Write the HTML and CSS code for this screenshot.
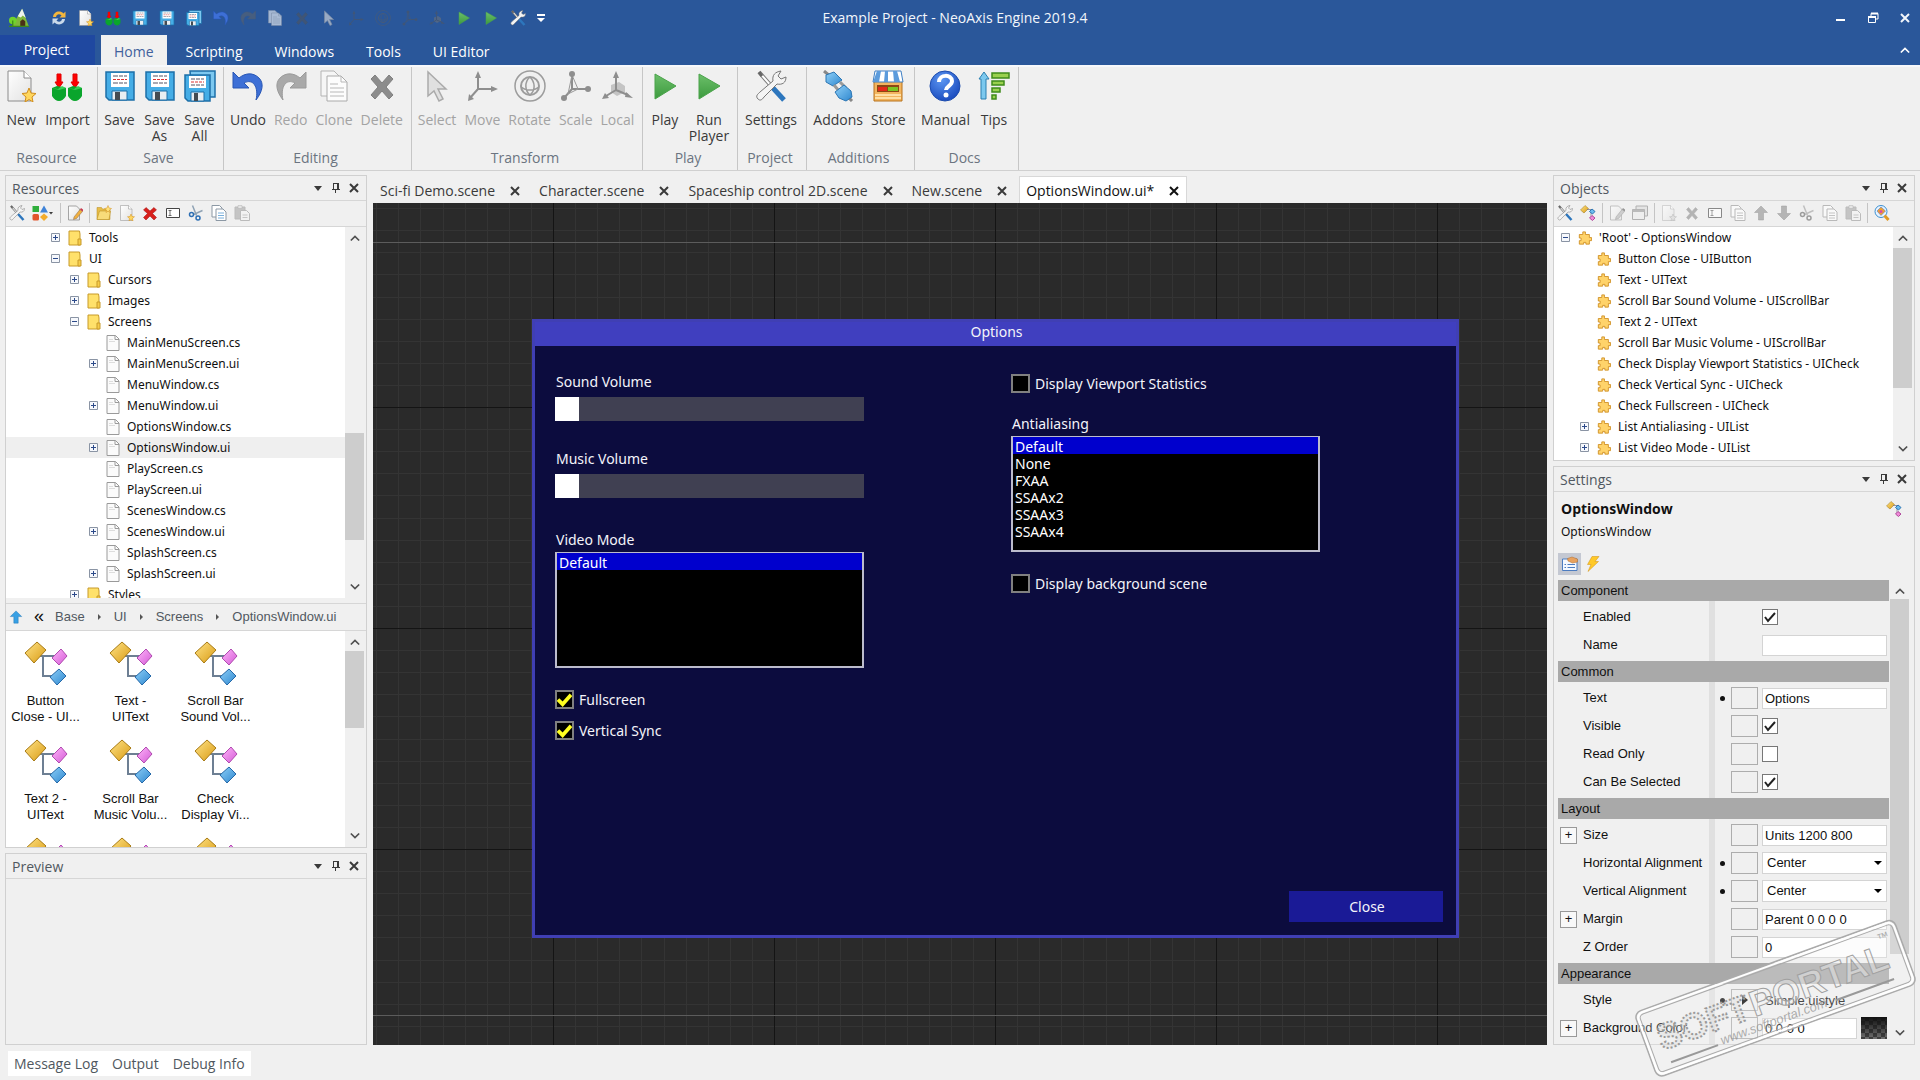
FILE: index.html
```html
<!DOCTYPE html>
<html lang="en">
<head>
<meta charset="utf-8">
<title>Example Project - NeoAxis Engine 2019.4</title>
<link rel="stylesheet" href="styles.css">
</head>
<body>
<svg class="sprite" aria-hidden="true">
  <defs>
    <linearGradient id="g-green" x1="0" y1="0" x2="0" y2="1"><stop offset="0" stop-color="#6cbf6a"/><stop offset="1" stop-color="#3c9a3e"/></linearGradient>
    <linearGradient id="g-blue" x1="0" y1="0" x2="1" y2="1"><stop offset="0" stop-color="#8fd0f8"/><stop offset="1" stop-color="#2e87cf"/></linearGradient>
    <linearGradient id="g-gold" x1="0" y1="0" x2="1" y2="1"><stop offset="0" stop-color="#ffe488"/><stop offset="1" stop-color="#d99a12"/></linearGradient>
    <linearGradient id="g-pink" x1="0" y1="0" x2="1" y2="1"><stop offset="0" stop-color="#ffb6fa"/><stop offset="1" stop-color="#d45ad6"/></linearGradient>
    <linearGradient id="g-page" x1="0" y1="0" x2="1" y2="1"><stop offset="0" stop-color="#ffffff"/><stop offset="1" stop-color="#e2e2e2"/></linearGradient>
    <radialGradient id="g-help" cx=".4" cy=".3" r=".8"><stop offset="0" stop-color="#5b96f2"/><stop offset="1" stop-color="#1443b8"/></radialGradient>
  </defs>
  <symbol id="i-new" viewBox="0 0 32 32"><path d="M3 1h16l7 7v23H3z" fill="url(#g-page)" stroke="#8c8c8c"/><path d="M19 1v7h7" fill="#fff" stroke="#8c8c8c"/><path d="M24 18l2 5 5 .500-4 3.500 1 5-4-2.500-4 2.500 1-5-4-3.500 5-.5z" fill="#ffd75e" stroke="#d08c1c"/></symbol>
  <symbol id="i-import" viewBox="0 0 32 32"><path d="M6 4h4v8h2l-4 6-4-6h2zM22 4h4v8h2l-4 6-4-6h2z" fill="#f00" stroke="#e00000"/><path d="M1 18l5-2 9 2v8q-3 5-7 5t-7-5zM17 18l5-2 9 2v8q-3 5-7 5t-7-5z" fill="#0aa52c"/><path d="M1 18l7 2 7-2-4-2-4 3zM17 18l7 2 7-2-4-2-4 3z" fill="#35cf55"/></symbol>
  <symbol id="i-save" viewBox="0 0 32 32"><path d="M2 2h28v28H5l-3-3z" fill="#45ade6" stroke="#1c6fa8" stroke-width="1.500"/><path d="M7 3h18v14H7z" fill="#fff"/><path d="M9 6h5m1 0h4m1 0h3M9 13h5m1 0h4m1 0h3" stroke="#556"/><path d="M9 9.500h14" stroke="#d33" stroke-dasharray="3 1"/><path d="M8 21h15v9H8z" fill="#e9eef2" stroke="#1c6fa8"/><path d="M11 22h5v8h-5z" fill="#444b52"/></symbol>
  <symbol id="i-saveall" viewBox="0 0 32 32"><path d="M6 1h25v26H8z" fill="#7cc8f0" stroke="#1c6fa8" stroke-width="1.500"/><path d="M1 5h25v26H4l-3-3z" fill="#45ade6" stroke="#1c6fa8" stroke-width="1.500"/><path d="M5 6h17v12H5z" fill="#fff"/><path d="M7 9h4m1 0h4m1 0h3M7 15h4m1 0h4m1 0h3" stroke="#556"/><path d="M7 12h13" stroke="#d33" stroke-dasharray="3 1"/><path d="M7 22h13v9H7z" fill="#e9eef2" stroke="#1c6fa8"/><path d="M10 23h4v8h-4z" fill="#444b52"/></symbol>
  <symbol id="i-undo" viewBox="0 0 32 32"><path d="M1 2v16h16l-5-5c9-5 15 4 12 17 7-9 8-17 3-22C21 2 13 3 7 8z" fill="#3d6fd6" stroke="#2856b4"/></symbol>
  <symbol id="i-redo" viewBox="0 0 32 32"><path d="M31 2v16H15l5-5C11 8 5 17 8 30 1 21 0 13 5 8c6-6 14-5 20 0z" fill="#a9a9a9" stroke="#9a9a9a"/></symbol>
  <symbol id="i-clone" viewBox="0 0 32 32"><path d="M3 1h13l5 5v20H3z" fill="#f6f6f6" stroke="#b4b4b4"/><path d="M9 6h14l6 6v19H9z" fill="#fcfcfc" stroke="#aaa"/><path d="M23 6v6h6M12 14h8m-8 4h14m-14 4h14m-14 4h14" fill="none" stroke="#b8b8b8"/></symbol>
  <symbol id="i-delete" viewBox="0 0 32 32"><path d="M9 5l7 8 7-8 4 4-7 8 7 8-4 4-7-8-7 8-4-4 7-8-7-8z" fill="#8c8c8c" stroke="#808080"/></symbol>
  <symbol id="i-select" viewBox="0 0 32 32"><path d="M7 2v24l6-5 5 10 4-2-5-10h8z" fill="#e0e0e0" stroke="#aaa" stroke-width="1.500"/></symbol>
  <symbol id="i-move" viewBox="0 0 32 32"><path d="M12 5v14h15M12 19l-8 9" fill="none" stroke="#8e8e8e" stroke-width="2"/><path d="M12 1l3 7H9zM32 19l-7-3v6zM2 31l1-7 5 5z" fill="#8e8e8e"/></symbol>
  <symbol id="i-rotate" viewBox="0 0 32 32"><g fill="none" stroke="#9c9c9c"><circle cx="16" cy="16" r="15" stroke-width="1.500"/><circle cx="16" cy="16" r="9" stroke-width="2"/><path d="M16 7c-6 5-5 14 0 18 6-5 5-13 0-18M7 17c5 4 13 4 18 0" stroke-width="1.500"/></g></symbol>
  <symbol id="i-scale" viewBox="0 0 32 32"><path d="M12 5v14h16M12 19l-8 9" fill="none" stroke="#8e8e8e" stroke-width="2"/><path d="M12 5l6 14-10 5z" fill="none" stroke="#999"/><circle cx="12" cy="4" r="3" fill="#8e8e8e"/><circle cx="28" cy="19" r="3" fill="#8e8e8e"/><circle cx="4" cy="28" r="3" fill="#8e8e8e"/></symbol>
  <symbol id="i-local" viewBox="0 0 32 32"><path d="M10 15l8-3 6 4v6l-8 4-6-4z" fill="#c4c4c4"/><path d="M15 6v14l12 5M15 20L5 26" fill="none" stroke="#8e8e8e" stroke-width="2"/><path d="M15 1l3 7h-6zM32 28l-7-6-1 5zM1 29l3-6 4 5z" fill="#8e8e8e"/></symbol>
  <symbol id="i-play" viewBox="0 0 32 32"><path d="M6 4l21 12L6 29z" fill="url(#g-green)" stroke="#4aa34a"/></symbol>
  <symbol id="i-tools" viewBox="0 0 32 32"><path d="M4 2l14 16" stroke="#777" stroke-width="4"/><path d="M4 2l14 16" stroke="#fff" stroke-width="2"/><path d="M18 18l11 12" stroke="#2d76bd" stroke-width="5"/><path d="M3 29c-3-3 0-5 2-7l13-11c-1-6 2-9 8-10l-3 5 3 3 5-2c0 6-4 8-9 7L9 27c-2 3-4 4-6 2z" fill="#f4f4f4" stroke="#777"/><path d="M4 2l3 4" stroke="#666" stroke-width="3"/></symbol>
  <symbol id="i-addons" viewBox="0 0 32 32"><path d="M2 1l7 6M24 25l6 6" stroke="#888" stroke-width="3"/><path d="M4 5l8-3 8 8-9 6-7-4z" fill="url(#g-blue)" stroke="#2b76b4"/><path d="M12 15l5 6m1-9l6 6" stroke="#9a9a9a" stroke-width="3"/><path d="M13 22l9-7 7 6 1 6-6 4-7-3z" fill="url(#g-blue)" stroke="#2b76b4"/></symbol>
  <symbol id="i-store" viewBox="0 0 32 32"><path d="M2 11h28v20H2z" fill="#f3b55f" stroke="#b8721d"/><path d="M5 15h22v7H5z" fill="#8c4714"/><path d="M6 17h9v4H6z" fill="#e32a1a"/><path d="M16 17h10v4H16z" fill="#7cc423"/><path d="M3 25h26M3 28h26" stroke="#ffe0a6" stroke-width="2"/><path d="M3 1h26l2 11H1z" fill="#fff" stroke="#3e7fc4"/><path d="M5 1h4l-2 11H1zM13 1h3v11h-4zM21 1h4l3 11h-6z" fill="#5b9bdc"/></symbol>
  <symbol id="i-help" viewBox="0 0 32 32"><circle cx="16" cy="16" r="15" fill="url(#g-help)" stroke="#1d4cae"/><path d="M10 12c0-8 13-8 13-1 0 5-6 5-6 9" fill="none" stroke="#fff" stroke-width="4"/><circle cx="17" cy="25" r="2.500" fill="#fff"/></symbol>
  <symbol id="i-tips" viewBox="0 0 32 32"><path d="M6 2l5 7H8v20H3V9H1z" fill="#7cc8ee" stroke="#2a7fb0"/><g fill="#9ad04e" stroke="#3f8a1a" stroke-width="1.500"><path d="M14 3h17v5H14z"/><path d="M14 11h12v4H14z"/><path d="M14 18h8v4h-8z"/><path d="M14 25h4v4h-4z"/></g></symbol>
  <symbol id="i-refresh" viewBox="0 0 32 32"><path d="M4 14C5 3 18 0 25 7l4-4v12H17l4-4c-4-4-10-3-11 3z" fill="#f3b63c"/><path d="M28 18c-1 11-14 14-21 7l-4 4V17h12l-4 4c4 4 10 3 11-3z" fill="#c9d9ea"/></symbol>
  <symbol id="i-logo" viewBox="0 0 32 32"><path d="M4 30L21 1l11 29z" fill="#7fb83c"/><path d="M21 1l-7 12 5 2 3-3 5 4z" fill="#eef3ee"/><path d="M18 30v-9l4-3 4 3v9z" fill="#4a3018"/><circle cx="6" cy="20" r="6" fill="#6fd42c"/><path d="M6 20v10M0 29.500h32" stroke="#3c8a1c" stroke-width="2"/></symbol>
  <symbol id="i-edit" viewBox="0 0 32 32"><path d="M3 2h16l6 6v22H3z" fill="url(#g-page)" stroke="#8a8a8a" stroke-width="1.500"/><path d="M14 24L26 9l5 4-12 14-6 2z" fill="#f0b040" stroke="#8a6a4a"/><path d="M26 9l2-3 5 4-2 3z" fill="#c83c50"/></symbol>
  <symbol id="i-newfolder" viewBox="0 0 32 32"><path d="M2 5h9l2 3h15v21H2z" fill="#e7bd4a" stroke="#b58a1c"/><path d="M2 29l5-17h22l-3 17z" fill="#f8dc7a" stroke="#b58a1c"/><path d="M24 1l2 5 5 1-4 3 1 5-4-3-4 3 1-5-4-3 5-1z" fill="#ffe27a" stroke="#d08c1c"/></symbol>
  <symbol id="i-redx" viewBox="0 0 32 32"><path d="M8 5l8 7 8-7 5 5-8 7 8 8-5 5-8-8-8 8-5-5 8-8-8-7z" fill="#d8201c" stroke="#9c0f0f"/></symbol>
  <symbol id="i-rename" viewBox="0 0 32 32"><path d="M3 7h26v18H3z" fill="#fff" stroke="#444" stroke-width="2"/><path d="M7 11h6M10 11v10M7 21h6" stroke="#444" stroke-width="1.500" fill="none"/></symbol>
  <symbol id="i-cut" viewBox="0 0 32 32"><path d="M9 1l8 20M29 11L11 19" stroke="#8fa2b4" stroke-width="3"/><circle cx="7" cy="19" r="4" fill="none" stroke="#2e6fb4" stroke-width="3"/><circle cx="20" cy="26" r="4" fill="none" stroke="#2e6fb4" stroke-width="3"/></symbol>
  <symbol id="i-copy" viewBox="0 0 32 32"><path d="M2 1h15l5 5v18H2z" fill="#fff" stroke="#8c98a4" stroke-width="2"/><path d="M10 8h14l6 6v17H10z" fill="#fff" stroke="#8c98a4" stroke-width="2"/><path d="M14 16h12m-12 5h12m-12 5h12" stroke="#7ab0dc" stroke-width="2"/></symbol>
  <symbol id="i-paste" viewBox="0 0 32 32"><path d="M2 4h20v24H2z" fill="#a8a8a8" stroke="#999" stroke-width="2"/><path d="M8 1h8v6H8z" fill="#ddd" stroke="#888"/><path d="M13 11h12l6 6v14H13z" fill="#f4f4f4" stroke="#999" stroke-width="2"/><path d="M17 20h10m-10 5h10" stroke="#aaa" stroke-width="2"/></symbol>
  <symbol id="i-shapes" viewBox="0 0 32 32"><path d="M1 2h13v12H1z" fill="#2fae3c"/><path d="M24 1l8 14H16z" fill="#3f83d8"/><rect x="1" y="18" width="13" height="13" rx="3" fill="#e2542c"/><path d="M24 17l8 7-8 8-8-8z" fill="#f2ac2e"/></symbol>
  <symbol id="i-folder" viewBox="0 0 26 32"><path d="M1 2h21l1 6v22H1z" fill="#ffe16b" stroke="#c79a2a" stroke-width="2"/><path d="M19 18h6v12h-6z" fill="#f6cc4a" stroke="#c79a2a" stroke-width="2"/></symbol>
  <symbol id="i-file" viewBox="0 0 26 32"><path d="M1 1h17l7 7v23H1z" fill="#fbfbfb" stroke="#9a9a9a" stroke-width="2"/><path d="M17 1v8h8" fill="none" stroke="#9a9a9a" stroke-width="2"/><path d="M5 9h8m-8 4h12" stroke="#ddd" stroke-width="2"/></symbol>
  <symbol id="i-puzzle" viewBox="0 0 32 32"><path d="M3 8h8V2h6v6h9v7h5v7h-5v8h-8v-4h-5v4H3v-8h4v-6H3z" fill="#ffd36a" stroke="#cf8f24" stroke-width="2"/></symbol>
  <symbol id="i-parts" viewBox="0 0 32 32"><path d="M1 10l9-9 7 6-9 9z" fill="url(#g-gold)" stroke="#9a7418"/><path d="M14 9h8v15h4" fill="none" stroke="#778" stroke-width="1.500"/><path d="M19 13l5-5 6 5-5 5z" fill="#6cbcf0" stroke="#2b76b4" stroke-width="2"/><path d="M19 26l5-5 6 5-5 5z" fill="#f08ad8" stroke="#b04a9c" stroke-width="2"/></symbol>
  <symbol id="i-component" viewBox="0 0 44 44"><path d="M16 15h18M19 15v20h12" fill="none" stroke="#6d7f93" stroke-width="2"/><path d="M1 12L13 1l9 8-12 13z" fill="url(#g-gold)" stroke="#a87b14"/><path d="M28 17l9-9 6 7-8 9z" fill="url(#g-pink)" stroke="#b04ab0"/><path d="M26 36l9-8 7 7-9 9z" fill="url(#g-blue)" stroke="#2468a8"/></symbol>
  <symbol id="i-window" viewBox="0 0 32 32"><path d="M8 2h23v20H8z" fill="#ddd" stroke="#888" stroke-width="2"/><path d="M1 9h24v20H1z" fill="#eee" stroke="#888" stroke-width="2"/><path d="M1 9h24v5H1z" fill="#999"/></symbol>
  <symbol id="i-up" viewBox="0 0 32 32"><path d="M16 2l13 13h-8v15H11V15H3z" fill="#38a0e4" stroke="#1c74b4"/></symbol>
  <symbol id="i-down" viewBox="0 0 32 32"><path d="M16 30L3 17h8V2h10v15h8z" fill="#38a0e4" stroke="#1c74b4"/></symbol>
  <symbol id="i-search" viewBox="0 0 32 32"><circle cx="14" cy="13" r="12" fill="#e8f4ff" stroke="#3b8ed0" stroke-width="2"/><path d="M14 4l9 8-9 9-8-9z" fill="#f0a02e" stroke="#3b6ed0"/><circle cx="14" cy="13" r="3" fill="#d84ca8"/><path d="M21 21l8 9" stroke="#e09a24" stroke-width="6"/></symbol>
  <symbol id="i-bolt" viewBox="0 0 32 32"><path d="M14 1h14l-8 10h7L6 31l6-14H5z" fill="#ffc928" stroke="#d08e10"/></symbol>
  <symbol id="i-props" viewBox="0 0 32 32"><path d="M1 6h29v23H1z" fill="#f4f8ff" stroke="#4c7cc0" stroke-width="2"/><path d="M5 17h3m3 0h15M5 23h3m3 0h15" stroke="#4c7cc0" stroke-width="2"/><path d="M11 5l9-3 11 4v6l-10 2-9-4z" fill="#e8a25e" stroke="#b06c2c"/></symbol>
  <symbol id="i-x" viewBox="0 0 12 12"><path d="M2 2l8 8M10 2l-8 8" stroke="currentColor" stroke-width="2" fill="none"/></symbol>
  <symbol id="i-pin" viewBox="0 0 12 12"><path d="M3.500 1v6M3 1.500h5M2 7.500h8M5.500 7v4" stroke="currentColor" fill="none"/><path d="M7 1h2v6H7z" fill="currentColor"/></symbol>
  <symbol id="i-tri" viewBox="0 0 12 12"><path d="M2 4h8L6 9z" fill="currentColor"/></symbol>
  <symbol id="i-chup" viewBox="0 0 12 12"><path d="M1 9l5-5 5 5" fill="none" stroke="currentColor" stroke-width="2"/></symbol>
  <symbol id="i-chdown" viewBox="0 0 12 12"><path d="M1 3l5 5 5-5" fill="none" stroke="currentColor" stroke-width="2"/></symbol>
  <symbol id="i-plus" viewBox="0 0 9 9"><path d="M.5.500h8v8h-8z" fill="#f6f8fc" stroke="#8a94a4"/><path d="M2 4.500h5M4.500 2v5" stroke="#2c4a8a"/></symbol>
  <symbol id="i-minus" viewBox="0 0 9 9"><path d="M.5.500h8v8h-8z" fill="#f6f8fc" stroke="#8a94a4"/><path d="M2 4.500h5" stroke="#2c4a8a"/></symbol>
</svg>

<header class="titlebar">
  <div class="quick">
    <svg class="logo" aria-hidden="true"><use href="#i-logo"/></svg>
    <button aria-label="Refresh"><svg><use href="#i-refresh"/></svg></button>
    <button aria-label="New"><svg><use href="#i-new"/></svg></button>
    <button aria-label="Import"><svg><use href="#i-import"/></svg></button>
    <button aria-label="Save"><svg><use href="#i-save"/></svg></button>
    <button aria-label="Save As"><svg><use href="#i-save"/></svg></button>
    <button aria-label="Save All"><svg><use href="#i-saveall"/></svg></button>
    <button aria-label="Undo"><svg><use href="#i-undo"/></svg></button>
    <button aria-label="Redo" disabled><svg><use href="#i-redo"/></svg></button>
    <button aria-label="Clone" class="half"><svg><use href="#i-clone"/></svg></button>
    <button aria-label="Delete" disabled><svg><use href="#i-delete"/></svg></button>
    <button aria-label="Select" class="half"><svg><use href="#i-select"/></svg></button>
    <button aria-label="Move" disabled><svg><use href="#i-move"/></svg></button>
    <button aria-label="Rotate" disabled><svg><use href="#i-rotate"/></svg></button>
    <button aria-label="Scale" disabled><svg><use href="#i-scale"/></svg></button>
    <button aria-label="Local" disabled><svg><use href="#i-local"/></svg></button>
    <button aria-label="Play"><svg><use href="#i-play"/></svg></button>
    <button aria-label="Run Player"><svg><use href="#i-play"/></svg></button>
    <button aria-label="Settings"><svg><use href="#i-tools"/></svg></button>
    <button aria-label="Customize" class="more"><svg viewBox="0 0 8 8"><path d="M0 0h8v2H0zM0 4h8L4 8z" fill="#fff"/></svg></button>
  </div>
  <h1 class="title">Example Project - NeoAxis Engine 2019.4</h1>
  <div class="winbtns">
    <button aria-label="Minimize"><svg viewBox="0 0 12 12"><path d="M1 7h9v2H1z" fill="#fff"/></svg></button>
    <button aria-label="Restore"><svg viewBox="0 0 12 12"><path d="M1.500 5.500h7v5h-7zM4 4V1.500h7V7H9" fill="none" stroke="#fff"/><path d="M1 5h8M4 1.500h7" stroke="#fff" stroke-width="2"/></svg></button>
    <button aria-label="Close window"><svg><use href="#i-x"/></svg></button>
  </div>
</header>

<nav class="menubar">
  <button class="menu project">Project</button>
  <button class="menu current">Home</button>
  <button class="menu">Scripting</button>
  <button class="menu">Windows</button>
  <button class="menu">Tools</button>
  <button class="menu">UI Editor</button>
  <button class="collapse" aria-label="Collapse ribbon"><svg><use href="#i-chup"/></svg></button>
</nav>

<section class="ribbon">
  <div class="group w-resource">
    <div class="tools"><button><svg><use href="#i-new"/></svg>New</button><button><svg><use href="#i-import"/></svg>Import</button></div>
    <div class="caption">Resource</div>
  </div>
  <div class="group w-save">
    <div class="tools"><button><svg><use href="#i-save"/></svg>Save</button><button><svg><use href="#i-save"/></svg>Save<br>As</button><button><svg><use href="#i-saveall"/></svg>Save<br>All</button></div>
    <div class="caption">Save</div>
  </div>
  <div class="group w-editing">
    <div class="tools"><button><svg><use href="#i-undo"/></svg>Undo</button><button disabled><svg><use href="#i-redo"/></svg>Redo</button><button disabled><svg><use href="#i-clone"/></svg>Clone</button><button disabled><svg><use href="#i-delete"/></svg>Delete</button></div>
    <div class="caption">Editing</div>
  </div>
  <div class="group w-transform">
    <div class="tools"><button disabled><svg><use href="#i-select"/></svg>Select</button><button disabled><svg><use href="#i-move"/></svg>Move</button><button disabled><svg><use href="#i-rotate"/></svg>Rotate</button><button disabled><svg><use href="#i-scale"/></svg>Scale</button><button disabled><svg><use href="#i-local"/></svg>Local</button></div>
    <div class="caption">Transform</div>
  </div>
  <div class="group w-play">
    <div class="tools"><button><svg><use href="#i-play"/></svg>Play</button><button><svg><use href="#i-play"/></svg>Run<br>Player</button></div>
    <div class="caption">Play</div>
  </div>
  <div class="group w-project">
    <div class="tools"><button><svg><use href="#i-tools"/></svg>Settings</button></div>
    <div class="caption">Project</div>
  </div>
  <div class="group w-additions">
    <div class="tools"><button><svg><use href="#i-addons"/></svg>Addons</button><button><svg><use href="#i-store"/></svg>Store</button></div>
    <div class="caption">Additions</div>
  </div>
  <div class="group w-docs">
    <div class="tools"><button><svg><use href="#i-help"/></svg>Manual</button><button><svg><use href="#i-tips"/></svg>Tips</button></div>
    <div class="caption">Docs</div>
  </div>
</section>

<main class="workspace">
  <aside class="side">
    <section class="panel grow">
      <header class="phead"><h2>Resources</h2><button aria-label="Menu"><svg><use href="#i-tri"/></svg></button><button aria-label="Pin"><svg><use href="#i-pin"/></svg></button><button aria-label="Close"><svg><use href="#i-x"/></svg></button></header>
      <div class="toolbar">
        <button aria-label="Options"><svg><use href="#i-tools"/></svg></button>
        <button aria-label="Filter" class="drop"><svg><use href="#i-shapes"/></svg><svg class="caret"><use href="#i-tri"/></svg></button>
        <span class="sep"></span>
        <button aria-label="Edit"><svg><use href="#i-edit"/></svg></button>
        <span class="sep"></span>
        <button aria-label="New folder"><svg><use href="#i-newfolder"/></svg></button>
        <button aria-label="New resource"><svg><use href="#i-new"/></svg></button>
        <button aria-label="Delete"><svg><use href="#i-redx"/></svg></button>
        <button aria-label="Rename"><svg><use href="#i-rename"/></svg></button>
        <button aria-label="Cut"><svg><use href="#i-cut"/></svg></button>
        <button aria-label="Copy"><svg><use href="#i-copy"/></svg></button>
        <button aria-label="Paste" disabled><svg><use href="#i-paste"/></svg></button>
      </div>
      <div class="scrollbox grow">
        <ul class="tree">
          <li class="d1"><svg class="exp"><use href="#i-plus"/></svg><svg class="ico"><use href="#i-folder"/></svg>Tools</li>
          <li class="d1"><svg class="exp"><use href="#i-minus"/></svg><svg class="ico"><use href="#i-folder"/></svg>UI</li>
          <li class="d2"><svg class="exp"><use href="#i-plus"/></svg><svg class="ico"><use href="#i-folder"/></svg>Cursors</li>
          <li class="d2"><svg class="exp"><use href="#i-plus"/></svg><svg class="ico"><use href="#i-folder"/></svg>Images</li>
          <li class="d2"><svg class="exp"><use href="#i-minus"/></svg><svg class="ico"><use href="#i-folder"/></svg>Screens</li>
          <li class="d3"><svg class="exp"></svg><svg class="ico"><use href="#i-file"/></svg>MainMenuScreen.cs</li>
          <li class="d3"><svg class="exp"><use href="#i-plus"/></svg><svg class="ico"><use href="#i-file"/></svg>MainMenuScreen.ui</li>
          <li class="d3"><svg class="exp"></svg><svg class="ico"><use href="#i-file"/></svg>MenuWindow.cs</li>
          <li class="d3"><svg class="exp"><use href="#i-plus"/></svg><svg class="ico"><use href="#i-file"/></svg>MenuWindow.ui</li>
          <li class="d3"><svg class="exp"></svg><svg class="ico"><use href="#i-file"/></svg>OptionsWindow.cs</li>
          <li class="d3 selected"><svg class="exp"><use href="#i-plus"/></svg><svg class="ico"><use href="#i-file"/></svg>OptionsWindow.ui</li>
          <li class="d3"><svg class="exp"></svg><svg class="ico"><use href="#i-file"/></svg>PlayScreen.cs</li>
          <li class="d3"><svg class="exp"></svg><svg class="ico"><use href="#i-file"/></svg>PlayScreen.ui</li>
          <li class="d3"><svg class="exp"></svg><svg class="ico"><use href="#i-file"/></svg>ScenesWindow.cs</li>
          <li class="d3"><svg class="exp"><use href="#i-plus"/></svg><svg class="ico"><use href="#i-file"/></svg>ScenesWindow.ui</li>
          <li class="d3"><svg class="exp"></svg><svg class="ico"><use href="#i-file"/></svg>SplashScreen.cs</li>
          <li class="d3"><svg class="exp"><use href="#i-plus"/></svg><svg class="ico"><use href="#i-file"/></svg>SplashScreen.ui</li>
          <li class="d2"><svg class="exp"><use href="#i-plus"/></svg><svg class="ico"><use href="#i-folder"/></svg>Styles</li>
        </ul>
        <div class="vscroll"><svg><use href="#i-chup"/></svg><div class="track"><span class="thumb at-files"></span></div><svg><use href="#i-chdown"/></svg></div>
      </div>
      <nav class="crumbs">
        <button aria-label="Up"><svg><use href="#i-up"/></svg></button>
        <span class="back">«</span><a href="#base">Base</a><i></i><a href="#ui">UI</a><i></i><a href="#screens">Screens</a><i></i><a href="#options">OptionsWindow.ui</a>
      </nav>
      <div class="scrollbox contents">
        <ul class="tiles">
          <li><svg><use href="#i-component"/></svg>Button<br>Close - UI...</li>
          <li><svg><use href="#i-component"/></svg>Text -<br>UIText</li>
          <li><svg><use href="#i-component"/></svg>Scroll Bar<br>Sound Vol...</li>
          <li><svg><use href="#i-component"/></svg>Text 2 -<br>UIText</li>
          <li><svg><use href="#i-component"/></svg>Scroll Bar<br>Music Volu...</li>
          <li><svg><use href="#i-component"/></svg>Check<br>Display Vi...</li>
          <li><svg><use href="#i-component"/></svg></li>
          <li><svg><use href="#i-component"/></svg></li>
          <li><svg><use href="#i-component"/></svg></li>
        </ul>
        <div class="vscroll"><svg><use href="#i-chup"/></svg><div class="track"><span class="thumb at-tiles"></span></div><svg><use href="#i-chdown"/></svg></div>
      </div>
    </section>
    <section class="panel preview">
      <header class="phead"><h2>Preview</h2><button aria-label="Menu"><svg><use href="#i-tri"/></svg></button><button aria-label="Pin"><svg><use href="#i-pin"/></svg></button><button aria-label="Close"><svg><use href="#i-x"/></svg></button></header>
    </section>
  </aside>

  <section class="editor">
    <div class="doctabs">
      <div class="doctab"><a href="#d1">Sci-fi Demo.scene</a><button aria-label="Close"><svg><use href="#i-x"/></svg></button></div>
      <div class="doctab"><a href="#d2">Character.scene</a><button aria-label="Close"><svg><use href="#i-x"/></svg></button></div>
      <div class="doctab"><a href="#d3">Spaceship control 2D.scene</a><button aria-label="Close"><svg><use href="#i-x"/></svg></button></div>
      <div class="doctab"><a href="#d4">New.scene</a><button aria-label="Close"><svg><use href="#i-x"/></svg></button></div>
      <div class="doctab active"><a href="#d5">OptionsWindow.ui*</a><button aria-label="Close"><svg><use href="#i-x"/></svg></button></div>
    </div>
    <div class="canvas">
      <svg class="gridlines" aria-hidden="true">
        <defs><pattern id="grid" x="180" y="204" width="221" height="221" patternUnits="userSpaceOnUse">
          <path d="M22.500 0v221M44.500 0v221M66.500 0v221M88.500 0v221M111.500 0v221M133.500 0v221M155.500 0v221M177.500 0v221M199.500 0v221M0 22.500h221M0 44.500h221M0 66.500h221M0 88.500h221M0 111.500h221M0 133.500h221M0 155.500h221M0 177.500h221M0 199.500h221" stroke="#343434"/>
          <path d="M.5 0v221M0 .5h221" stroke="#141414"/>
        </pattern></defs>
        <rect width="100%" height="100%" fill="url(#grid)"/>
        <path d="M0 39.500h4000M0 812.500h4000" stroke="#5c5c5c"/>
      </svg>
      <div class="dialog">
        <h2>Options</h2>
        <div class="cols">
          <div class="col">
            <label for="sound">Sound Volume</label>
            <input type="range" id="sound" value="0">
            <label for="music">Music Volume</label>
            <input type="range" id="music" value="0">
            <label for="video" class="video">Video Mode</label>
            <select id="video" size="6"><option selected>Default</option></select>
            <label class="check first"><input type="checkbox" checked>Fullscreen</label>
            <label class="check"><input type="checkbox" checked>Vertical Sync</label>
          </div>
          <div class="col">
            <label class="check"><input type="checkbox">Display Viewport Statistics</label>
            <label for="aa" class="aa">Antialiasing</label>
            <select id="aa" size="6"><option selected>Default</option><option>None</option><option>FXAA</option><option>SSAAx2</option><option>SSAAx3</option><option>SSAAx4</option></select>
            <label class="check first"><input type="checkbox">Display background scene</label>
          </div>
        </div>
        <button class="close">Close</button>
      </div>
    </div>
  </section>

  <aside class="side">
    <section class="panel objects">
      <header class="phead"><h2>Objects</h2><button aria-label="Menu"><svg><use href="#i-tri"/></svg></button><button aria-label="Pin"><svg><use href="#i-pin"/></svg></button><button aria-label="Close"><svg><use href="#i-x"/></svg></button></header>
      <div class="toolbar">
        <button aria-label="Options"><svg><use href="#i-tools"/></svg></button>
        <button aria-label="Structure"><svg><use href="#i-parts"/></svg></button>
        <span class="sep"></span>
        <button aria-label="Edit" disabled><svg><use href="#i-edit"/></svg></button>
        <button aria-label="Open window" disabled><svg><use href="#i-window"/></svg></button>
        <span class="sep"></span>
        <button aria-label="New object" disabled><svg><use href="#i-new"/></svg></button>
        <button aria-label="Delete" disabled><svg><use href="#i-delete"/></svg></button>
        <button aria-label="Rename" disabled><svg><use href="#i-rename"/></svg></button>
        <button aria-label="Clone" disabled><svg><use href="#i-copy"/></svg></button>
        <button aria-label="Move up" disabled><svg><use href="#i-up"/></svg></button>
        <button aria-label="Move down" disabled><svg><use href="#i-down"/></svg></button>
        <button aria-label="Cut" disabled><svg><use href="#i-cut"/></svg></button>
        <button aria-label="Copy" disabled><svg><use href="#i-copy"/></svg></button>
        <button aria-label="Paste" disabled><svg><use href="#i-paste"/></svg></button>
        <span class="sep"></span>
        <button aria-label="Search"><svg><use href="#i-search"/></svg></button>
      </div>
      <div class="scrollbox grow">
        <ul class="tree">
          <li class="o0"><svg class="exp"><use href="#i-minus"/></svg><svg class="ico"><use href="#i-puzzle"/></svg>'Root' - OptionsWindow</li>
          <li class="o1"><svg class="exp"></svg><svg class="ico"><use href="#i-puzzle"/></svg>Button Close - UIButton</li>
          <li class="o1"><svg class="exp"></svg><svg class="ico"><use href="#i-puzzle"/></svg>Text - UIText</li>
          <li class="o1"><svg class="exp"></svg><svg class="ico"><use href="#i-puzzle"/></svg>Scroll Bar Sound Volume - UIScrollBar</li>
          <li class="o1"><svg class="exp"></svg><svg class="ico"><use href="#i-puzzle"/></svg>Text 2 - UIText</li>
          <li class="o1"><svg class="exp"></svg><svg class="ico"><use href="#i-puzzle"/></svg>Scroll Bar Music Volume - UIScrollBar</li>
          <li class="o1"><svg class="exp"></svg><svg class="ico"><use href="#i-puzzle"/></svg>Check Display Viewport Statistics - UICheck</li>
          <li class="o1"><svg class="exp"></svg><svg class="ico"><use href="#i-puzzle"/></svg>Check Vertical Sync - UICheck</li>
          <li class="o1"><svg class="exp"></svg><svg class="ico"><use href="#i-puzzle"/></svg>Check Fullscreen - UICheck</li>
          <li class="o1"><svg class="exp"><use href="#i-plus"/></svg><svg class="ico"><use href="#i-puzzle"/></svg>List Antialiasing - UIList</li>
          <li class="o1"><svg class="exp"><use href="#i-plus"/></svg><svg class="ico"><use href="#i-puzzle"/></svg>List Video Mode - UIList</li>
        </ul>
        <div class="vscroll"><svg><use href="#i-chup"/></svg><div class="track"><span class="thumb at-objects"></span></div><svg><use href="#i-chdown"/></svg></div>
      </div>
    </section>
    <section class="panel grow">
      <header class="phead"><h2>Settings</h2><button aria-label="Menu"><svg><use href="#i-tri"/></svg></button><button aria-label="Pin"><svg><use href="#i-pin"/></svg></button><button aria-label="Close"><svg><use href="#i-x"/></svg></button></header>
      <div class="subject"><div><h3>OptionsWindow</h3><p>OptionsWindow</p></div><svg><use href="#i-parts"/></svg></div>
      <div class="modes"><button class="on" aria-label="Properties"><svg><use href="#i-props"/></svg></button><button aria-label="Events"><svg><use href="#i-bolt"/></svg></button></div>
      <div class="inspector">
        <div class="props">
          <h4>Component</h4>
          <div class="rows">
            <div class="row"><label for="p1">Enabled</label><input type="checkbox" id="p1" checked></div>
            <div class="row"><label for="p2">Name</label><input type="text" id="p2"></div>
          </div>
          <h4>Common</h4>
          <div class="rows">
            <div class="row"><label for="p3">Text</label><b class="dot"></b><button class="ref" aria-label="Reference"></button><input type="text" id="p3" value="Options"></div>
            <div class="row"><label for="p4">Visible</label><button class="ref" aria-label="Reference"></button><input type="checkbox" id="p4" checked></div>
            <div class="row"><label for="p5">Read Only</label><button class="ref" aria-label="Reference"></button><input type="checkbox" id="p5"></div>
            <div class="row"><label for="p6">Can Be Selected</label><button class="ref" aria-label="Reference"></button><input type="checkbox" id="p6" checked></div>
          </div>
          <h4>Layout</h4>
          <div class="rows">
            <div class="row"><button class="more">+</button><label for="p7">Size</label><button class="ref" aria-label="Reference"></button><input type="text" id="p7" value="Units 1200 800"></div>
            <div class="row"><label for="p8">Horizontal Alignment</label><b class="dot"></b><button class="ref" aria-label="Reference"></button><select id="p8"><option>Center</option></select></div>
            <div class="row"><label for="p9">Vertical Alignment</label><b class="dot"></b><button class="ref" aria-label="Reference"></button><select id="p9"><option>Center</option></select></div>
            <div class="row"><button class="more">+</button><label for="p10">Margin</label><button class="ref" aria-label="Reference"></button><input type="text" id="p10" value="Parent 0 0 0 0"></div>
            <div class="row"><label for="p11">Z Order</label><button class="ref" aria-label="Reference"></button><input type="text" id="p11" value="0"></div>
          </div>
          <h4>Appearance</h4>
          <div class="rows">
            <div class="row"><label for="p12">Style</label><b class="dot"></b><button class="ref" aria-label="Reference"><svg viewBox="0 0 6 10"><path d="M0 0l6 5-6 5z"/></svg></button><input type="text" id="p12" class="plain" value="Simple.uistyle"></div>
            <div class="row with-swatch"><button class="more">+</button><label for="p13">Background Color</label><button class="ref" aria-label="Reference"></button><input type="text" id="p13" value="0 0 0 0"><button class="swatch" aria-label="Pick color"></button></div>
          </div>
        </div>
        <div class="vscroll"><svg><use href="#i-chup"/></svg><div class="track"><span class="thumb at-props"></span></div><svg><use href="#i-chdown"/></svg></div>
      </div>
    </section>
  </aside>
</main>

<footer class="bottom"><div class="docks"><button>Message Log</button><button>Output</button><button>Debug Info</button></div></footer>

<svg class="stamp" viewBox="0 0 290 166">
  <g transform="translate(4 99) rotate(-20)">
    <rect width="276" height="69" rx="7" fill="#f4f4f4" fill-opacity=".25" stroke="#aaa" stroke-width="1.500"/>
    <rect x="4" y="4" width="268" height="61" rx="4" fill="none" stroke="#aaa"/>
    <rect x="2" y="2" width="272" height="65" rx="6" fill="none" stroke="#fff" stroke-width="2"/>
    <text x="14" y="45" class="soft">SOFT</text>
    <text x="112" y="45" class="portal">PORTAL</text>
    <text x="254" y="18" class="tm">™</text>
    <path d="M18 59h50M194 57h62" stroke="#999" stroke-width="2"/>
    <text x="72" y="60" class="url">www.softportal.com</text>
  </g>
</svg>
</body>
</html>
```
FILE: styles.css
```css
* { box-sizing: border-box; }
body {
  margin: 0;
  height: 100vh;
  display: grid;
  grid-template-rows: 35px 30px 106px minmax(0, 1fr) 35px;
  background: #f0f0f0;
  color: #3a3a3a;
  font: 14px/16px "Open Sans", "Noto Sans", sans-serif;
  overflow: hidden;
  position: relative;
}
h1, h2, h3, h4, p, ul { margin: 0; padding: 0; font-weight: normal; list-style: none; }
button { border: 0; padding: 0; background: none; color: inherit; font: inherit; }
a { color: inherit; text-decoration: none; }
svg { flex: none; display: block; }
.sprite { position: absolute; width: 0; height: 0; }
.grow { flex: 1; min-height: 0; }

/* title bar */
.titlebar {
  display: grid;
  grid-template-columns: 1fr auto 1fr;
  align-items: center;
  padding: 0 9px;
  background: #2a579a;
  color: #f2f6fb;
}
.quick { display: flex; align-items: center; gap: 11px; }
.quick svg { width: 16px; height: 16px; }
.quick .logo { width: 20px; height: 20px; margin-right: 11px; }
.quick button:disabled { opacity: .5; filter: brightness(.6); }
.quick .half { opacity: .6; }
.quick .more svg { width: 8px; height: 8px; }
.title { font-size: 14px; padding-right: 10px; }
.winbtns { display: flex; justify-content: flex-end; gap: 20px; }
.winbtns svg { width: 12px; height: 12px; }

/* menu tabs */
.menubar { display: flex; background: #2a579a; color: #fff; gap: 6px; padding-right: 9px; }
.menu { padding: 3px 13px 0; }
.menu.project { width: 95px; background: #1f48a0; padding: 0 15px 1px 13px; }
.menu.current { background: #f0f0f0; color: #41619c; }
.collapse { margin-left: auto; }
.collapse svg { width: 12px; height: 10px; }

/* ribbon */
.ribbon { display: flex; border-bottom: 1px solid #d0d0d0; border-top: 2px solid #f6f8fb; }
.group { display: flex; flex-direction: column; border-right: 1px solid #c6c6c6; padding-top: 3px; }
.w-resource { width: 98px; }
.w-save { width: 126px; }
.w-editing { width: 188px; }
.w-transform { width: 231px; }
.w-play { width: 95px; }
.w-project { width: 69px; }
.w-additions { width: 108px; }
.w-docs { width: 104px; }
.tools { flex: 1; display: flex; justify-content: center; align-items: flex-start; gap: 8px; padding-right: 2px; }
.tools button { display: flex; flex-direction: column; align-items: center; white-space: nowrap; }
.tools svg { width: 32px; height: 32px; margin-bottom: 10px; }
.tools button:disabled { color: #a3a3a3; }
.caption { height: 24px; text-align: center; color: #6b7480; padding: 4px 4px 0 0; }

/* docking layout */
.workspace { display: grid; grid-template-columns: 362px minmax(0, 1fr) 362px; gap: 6px; padding: 4px 5px 0; }
.side { display: flex; flex-direction: column; gap: 5px; min-height: 0; }
.panel { display: flex; flex-direction: column; border: 1px solid #d0d0d0; }
.preview { height: 192px; }
.objects { height: 286px; }
.phead { display: flex; align-items: center; height: 25px; padding: 0 6px; gap: 6px; border-bottom: 1px solid #d6d6d6; flex: none; }
.phead h2 { flex: 1; font-size: 14px; color: #505860; padding-top: 1px; }
.phead svg { width: 12px; height: 12px; }
.toolbar { display: flex; align-items: center; gap: 7px; height: 26px; padding: 0 3px 1px; border-bottom: 1px solid #d6d6d6; flex: none; }
.toolbar svg { width: 16px; height: 16px; }
.toolbar .drop { display: flex; align-items: center; }
.toolbar .caret { width: 6px; height: 8px; }
.toolbar button:disabled { filter: grayscale(1); opacity: .6; }
.sep { width: 1px; height: 20px; margin: 0 -1px; background: #c4c4c4; }

.scrollbox { display: flex; background: #fff; overflow: hidden; }
.vscroll { width: 21px; display: flex; flex-direction: column; align-items: center; background: #f0f0f0; color: #505050; padding: 4px 0; border-right: 2px solid #f0f0f0; flex: none; }
.vscroll svg { width: 10px; height: 14px; }
.track { flex: 1; align-self: stretch; position: relative; }
.thumb { position: absolute; left: 0; right: 0; background: #cdcdcd; }
.at-files { top: 56%; height: 32%; }
.at-tiles { top: 2px; height: 77px; }
.at-objects { top: 3px; height: 140px; }
.at-props { top: 1px; height: 83%; }

/* trees */
.tree { flex: 1; overflow: hidden; font: 12px/21px "Noto Sans", sans-serif; color: #101010; }
.tree li { display: flex; align-items: center; height: 21px; white-space: nowrap; }
.tree .exp { width: 9px; height: 9px; margin-right: 8px; }
.tree .ico { width: 14px; height: 16px; margin-right: 7px; }
.d1 { padding-left: 45px; }
.d2 { padding-left: 64px; }
.d3 { padding-left: 83px; }
.o0 { padding-left: 7px; }
.o1 { padding-left: 26px; }
.tree .selected { background: #efefef; }

.crumbs { display: flex; align-items: center; height: 28px; margin-top: 5px; padding: 0 3px; border: solid #d6d6d6; border-width: 1px 0; color: #505860; font: 13px/16px "Liberation Sans", sans-serif; flex: none; }
.crumbs svg { width: 14px; height: 14px; }
.crumbs .back { font-size: 18px; color: #111; margin: 0 11px 3px; }
.crumbs i { border: 3px solid transparent; border-left-color: #555; border-right: 0; margin: 0 13px; }
.contents { height: 216px; flex: none; }
.tiles { flex: 1; display: grid; grid-template-columns: repeat(3, 85px); grid-auto-rows: 98px; padding-top: 10px; font: 13px/16px "Liberation Sans", sans-serif; color: #101010; }
.tiles li { text-align: center; padding-right: 6px; white-space: nowrap; }
.tiles svg { width: 44px; height: 44px; margin: 0 auto 8px; }

/* documents */
.editor { display: flex; flex-direction: column; min-height: 0; }
.doctabs { display: flex; height: 28px; padding-top: 1px; }
.doctab { display: flex; align-items: center; gap: 14px; padding: 2px 9px 0 7px; margin-right: 2px; }
.doctab svg { width: 12px; height: 12px; }
.doctab.active { background: #fff; border: 1px solid #d8d8d8; border-bottom: 0; color: #111; padding: 1px 6px 0; }
.canvas { flex: 1; position: relative; background: #2a2a2a; overflow: hidden; }
.gridlines { position: absolute; width: 100%; height: 100%; }

.dialog {
  position: absolute;
  top: 116px; right: 88px; bottom: 107px; left: 159px;
  display: flex;
  flex-direction: column;
  border: 3px solid #403fb4;
  background: #0c0c3e;
  color: #f4f4fa;
  font: 14px/17px "Noto Sans", "Open Sans", sans-serif;
}
.dialog h2 { height: 24px; flex: none; background: #403fbf; text-align: center; font-size: 14px; line-height: 20px; padding-left: 2px; }
.cols { display: grid; grid-template-columns: 309px 309px; column-gap: 147px; padding: 27px 20px 0; flex: 1; }
.col { display: flex; flex-direction: column; }
.col label[for] { padding-left: 1px; }
.col input[type=range] { appearance: none; width: 100%; height: 24px; margin: 7px 0 29px; background: #404052; }
.col input[type=range]::-webkit-slider-thumb { appearance: none; width: 24px; height: 24px; background: #fff; }
.video { margin-top: 4px; }
.aa { margin-top: 11px; }
.col select { appearance: none; width: 100%; height: 116px; margin: 4px 0 21px; padding: 0; border: 2px solid #bcbccc; border-top-width: 1px; border-radius: 0; background: #000; color: #fff; font: inherit; overflow: hidden; outline: 0; }
.col option { min-height: 17px; height: 17px; line-height: 16px; padding: 0 2px; color: #fff; }
.col option:checked { background: #0000cd linear-gradient(#0000cd, #0000cd); color: #fff; -webkit-text-fill-color: #fff; }
.check { display: flex; align-items: center; gap: 5px; height: 20px; margin-bottom: 11px; }
.check input { appearance: none; width: 19px; height: 19px; margin: 0; border: 2px solid #808080; background: #000; }
.check input:checked { background: #000 url("data:image/svg+xml,%3Csvg xmlns='http://www.w3.org/2000/svg' viewBox='0 0 16 16'%3E%3Cpath d='M1 8l5 5 9-10' fill='none' stroke='%23ffff20' stroke-width='4'/%3E%3C/svg%3E"); }
.close { align-self: flex-end; width: 154px; height: 31px; margin: 0 13px 13px 0; padding-left: 2px; background: #1a1a96; }

/* settings panel */
.subject { display: flex; justify-content: space-between; align-items: flex-start; padding: 9px 12px 0 7px; color: #111; flex: none; }
.subject h3 { font: bold 14px/16px "Open Sans", sans-serif; }
.subject p { font: 12px/16px "Noto Sans", sans-serif; margin-top: 7px; }
.subject svg { width: 16px; height: 16px; }
.modes { display: flex; padding: 13px 4px 5px; flex: none; }
.modes button { width: 23px; height: 22px; display: grid; place-items: center; }
.modes .on { background: #c4c8d2; }
.modes svg { width: 16px; height: 16px; }
.inspector { flex: 1; min-height: 0; display: flex; gap: 1px; padding: 0 3px 0 4px; overflow: hidden; font: 13px/16px "Liberation Sans", sans-serif; color: #101010; }
.props { flex: 1; }
.props h4 { height: 21px; background: #a9a9a9; padding: 3px; font-size: 13px; line-height: 16px; }
.rows { padding: 2px 0; background: linear-gradient(#e0e0e0, #e0e0e0) 151px 0 / 6px 100% no-repeat; }
.row { display: grid; grid-template-columns: 17px 121px 21px 27px minmax(0, 1fr); column-gap: 4px; align-items: center; height: 28px; padding: 0 2px; }
.with-swatch { grid-template-columns: 17px 121px 21px 27px minmax(0, 1fr) 26px; }
.row label { grid-column: 2; grid-row: 1; margin-left: 2px; white-space: nowrap; }
.row .more { grid-column: 1; grid-row: 1; height: 17px; border: 1px solid #999; background: #f8f8f8; line-height: 14px; }
.dot { grid-column: 3; grid-row: 1; width: 5px; height: 5px; margin-left: 14px; border-radius: 50%; background: #111; }
.ref { grid-column: 4; grid-row: 1; height: 22px; border: 1px solid #adadad; display: grid; place-items: center; }
.ref svg { width: 6px; height: 10px; }
.row input, .row select { grid-column: 5; grid-row: 1; min-width: 0; margin: 0; font: inherit; color: inherit; border: 1px solid #d4d4d4; border-radius: 0; background: #fff; }
.row input[type=text] { width: 100%; height: 21px; padding: 0 2px; }
.row .plain { background: none; border-color: transparent; }
.row select { appearance: none; height: 22px; padding: 0 4px; background: #fff url("data:image/svg+xml,%3Csvg xmlns='http://www.w3.org/2000/svg' viewBox='0 0 8 4'%3E%3Cpath d='M0 0h8L4 4z'/%3E%3C/svg%3E") right 4px center / 8px 4px no-repeat; }
.row input[type=checkbox] { appearance: none; width: 16px; height: 16px; border-color: #777; }
.row input[type=checkbox]:checked { background: #fff url("data:image/svg+xml,%3Csvg xmlns='http://www.w3.org/2000/svg' viewBox='0 0 14 14'%3E%3Cpath d='M2 7l3 4 7-8' fill='none' stroke='%23222' stroke-width='2'/%3E%3C/svg%3E"); }
.swatch { grid-column: 6; grid-row: 1; width: 26px; height: 22px; background: linear-gradient(#111, rgba(20, 20, 20, .3)), repeating-conic-gradient(#555 0 25%, #999 0 50%) 0 0 / 8px 8px; }

/* bottom docks */
.bottom { padding: 6px 8px; }
.docks { display: inline-flex; gap: 14px; height: 25px; padding: 0 6px; background: #fff; color: #505860; }

/* stamp in the corner */
.stamp { position: absolute; right: 0; bottom: 0; width: 290px; height: 166px; pointer-events: none; font-family: "Liberation Sans", sans-serif; }
.portal, .soft { font-size: 36px; font-weight: bold; fill: #f4f4f4; fill-opacity: .4; stroke: #a0a0a0; }
.soft { fill: #ddd; stroke: #999; stroke-dasharray: 2 2; stroke-width: 2px; }
.tm { font-size: 12px; fill: #aaa; }
.url { font-size: 13px; font-style: italic; fill: #999; fill-opacity: .8; }
```
